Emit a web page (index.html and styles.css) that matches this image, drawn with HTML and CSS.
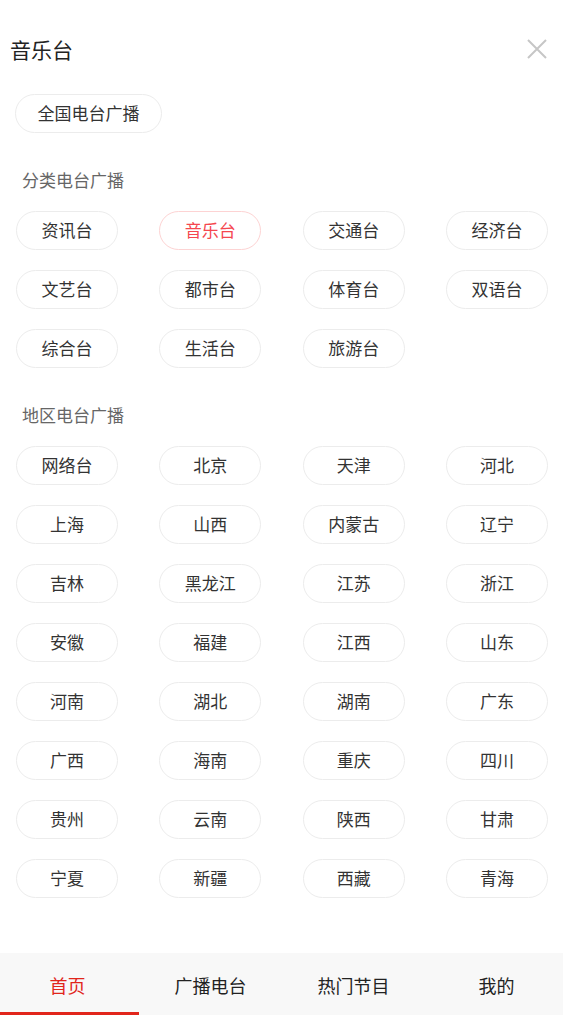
FILE: index.html
```html
<!DOCTYPE html>
<html lang="zh">
<head>
<meta charset="utf-8">
<link rel="stylesheet" href="styles.css">
</head>
<body>
<div class="page">
  <header class="header">
    <h1 class="title">音乐台</h1>
    <button class="close" aria-label="关闭">
      <svg width="20" height="20" viewBox="0 0 20 20"><path d="M1 1L19 19M19 1L1 19" stroke="#c6c6c6" stroke-width="2" fill="none"/></svg>
    </button>
  </header>

  <div class="top">
    <span class="pill pill-wide">全国电台广播</span>
  </div>

  <div class="label">分类电台广播</div>
  <div class="grid">
    <span class="pill">资讯台</span>
    <span class="pill active">音乐台</span>
    <span class="pill">交通台</span>
    <span class="pill">经济台</span>
    <span class="pill">文艺台</span>
    <span class="pill">都市台</span>
    <span class="pill">体育台</span>
    <span class="pill">双语台</span>
    <span class="pill">综合台</span>
    <span class="pill">生活台</span>
    <span class="pill">旅游台</span>
  </div>

  <div class="label">地区电台广播</div>
  <div class="grid">
    <span class="pill">网络台</span>
    <span class="pill">北京</span>
    <span class="pill">天津</span>
    <span class="pill">河北</span>
    <span class="pill">上海</span>
    <span class="pill">山西</span>
    <span class="pill">内蒙古</span>
    <span class="pill">辽宁</span>
    <span class="pill">吉林</span>
    <span class="pill">黑龙江</span>
    <span class="pill">江苏</span>
    <span class="pill">浙江</span>
    <span class="pill">安徽</span>
    <span class="pill">福建</span>
    <span class="pill">江西</span>
    <span class="pill">山东</span>
    <span class="pill">河南</span>
    <span class="pill">湖北</span>
    <span class="pill">湖南</span>
    <span class="pill">广东</span>
    <span class="pill">广西</span>
    <span class="pill">海南</span>
    <span class="pill">重庆</span>
    <span class="pill">四川</span>
    <span class="pill">贵州</span>
    <span class="pill">云南</span>
    <span class="pill">陕西</span>
    <span class="pill">甘肃</span>
    <span class="pill">宁夏</span>
    <span class="pill">新疆</span>
    <span class="pill">西藏</span>
    <span class="pill">青海</span>
  </div>

  <nav class="tabbar">
    <a class="tab tab-first tab-active">首页</a>
    <a class="tab">广播电台</a>
    <a class="tab">热门节目</a>
    <a class="tab tab-last">我的</a>
  </nav>
</div>
</body>
</html>
```

FILE: styles.css
```css
* { box-sizing: border-box; }
html, body { margin: 0; padding: 0; background: #fff; }
body {
  font-family: "Noto Sans CJK SC", "Noto Sans", sans-serif;
  color: #333;
}
.page {
  width: 563px;
  min-height: 1015px;
  display: flex;
  flex-direction: column;
}
.header {
  display: flex;
  align-items: center;
  justify-content: space-between;
  padding: 28px 16px 0 10px;
  height: 70px;
}
.title {
  margin: 0;
  font-size: 21px;
  font-weight: 400;
  line-height: 40px;
  color: #222;
}
.close {
  border: 0;
  background: none;
  padding: 0;
  width: 20px;
  height: 20px;
  margin-top: -1px;
  display: flex;
}
.top {
  padding: 24px 0 0 15px;
  display: flex;
}
.pill {
  display: flex;
  align-items: center;
  justify-content: center;
  height: 39px;
  padding-bottom: 3px;
  border: 1px solid #ececec;
  border-radius: 20px;
  font-size: 17px;
  color: #333;
  background: #fff;
}
.pill-wide {
  width: 147px;
}
.pill.active {
  color: #f5474f;
  border-color: #fdd3d3;
}
.label {
  margin-top: 35px;
  padding-left: 22px;
  padding-bottom: 2px;
  font-size: 17px;
  line-height: 24px;
  color: #666;
}
.grid {
  margin-top: 17px;
  padding: 0 15px 0 16px;
  display: grid;
  grid-template-columns: repeat(4, 102px);
  justify-content: space-between;
  row-gap: 20px;
}
.tabbar {
  margin-top: auto;
  height: 62px;
  background: #f8f8f8;
  display: grid;
  grid-template-columns: 139px 143px 143px 138px;
}
.tab {
  display: flex;
  align-items: center;
  justify-content: center;
  font-size: 18px;
  color: #222;
  border-bottom: 3px solid transparent;
  padding-top: 4px;
}
.tab-first { padding-right: 4px; }
.tab-last { padding-left: 5px; }
.tab-active {
  color: #e1251b;
  border-bottom-color: #e1251b;
}
```
